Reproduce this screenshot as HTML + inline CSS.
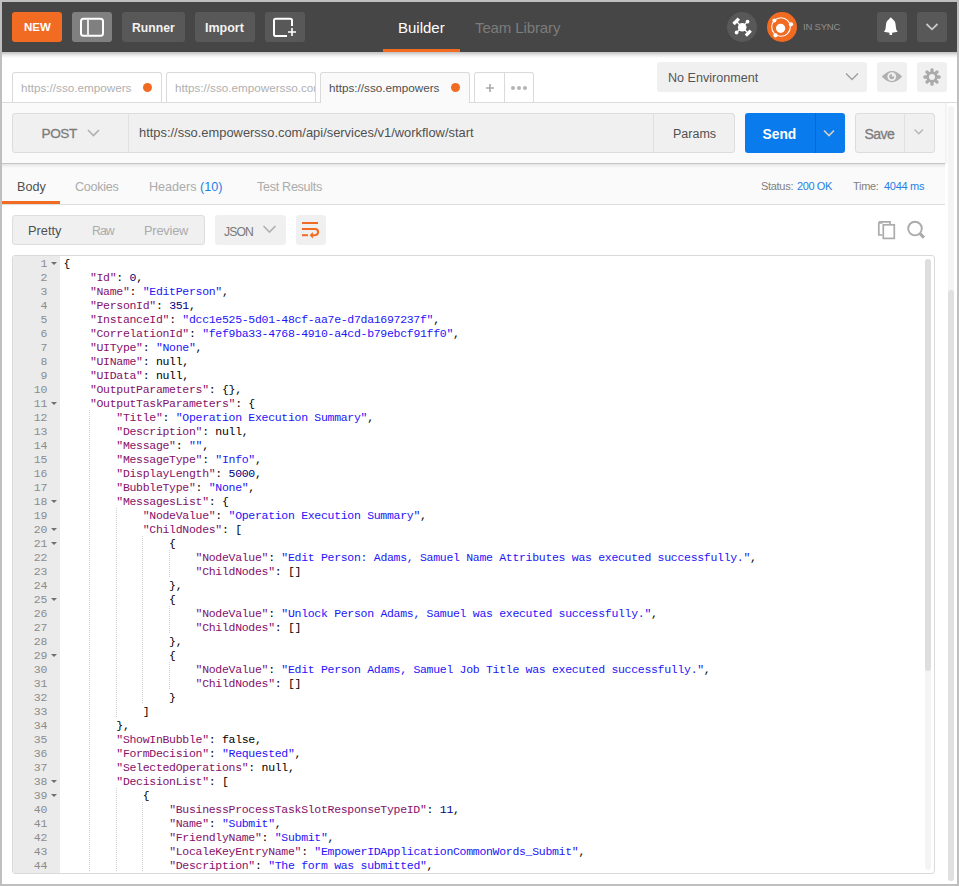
<!DOCTYPE html>
<html><head><meta charset="utf-8">
<style>
*{box-sizing:border-box;margin:0;padding:0}
html,body{width:959px;height:886px;overflow:hidden;background:#bfbfbf;font-family:"Liberation Sans",sans-serif;position:relative}
.a{position:absolute}
.t{position:absolute;white-space:nowrap;line-height:1}
.hb{position:absolute;top:12px;height:30px;border-radius:3px;background:#585858}
.hbt{position:absolute;white-space:nowrap;line-height:1;color:#f2f2f2;font-weight:bold;font-size:12.5px}

#code{font-family:"Liberation Mono",monospace;font-size:11.5px;letter-spacing:-0.3px;line-height:14px;white-space:pre;color:#000}
#code i{font-style:normal}
#code .k{color:#84106a}
#code .s{color:#2414f8}
#code .n{color:#000080}
#gut{font-family:"Liberation Mono",monospace;font-size:11.5px;letter-spacing:-0.3px;line-height:14px;color:#8c8c8c;text-align:right}
#gut div{padding-right:13px}
.g{position:absolute;width:1px;background-image:linear-gradient(#d0d0d0 50%,transparent 50%);background-size:1px 2px}
.f{position:absolute;left:37.6px;width:0;height:0;border-left:3px solid transparent;border-right:3px solid transparent;border-top:3.6px solid #707070;margin-top:6px}
</style></head><body>
<!-- window -->
<div class="a" style="left:2px;top:2px;width:955px;height:882px;background:#fff"></div>
<!-- header -->
<div class="a" style="left:2px;top:2px;width:955px;height:50px;background:#464646"></div>
<div class="a" style="left:2px;top:52px;width:955px;height:6px;background:linear-gradient(#c6c6c6,#cacaca 18%,#e6e6e6 45%,#fff)"></div>

<div class="hb" style="left:12px;width:50px;background:#f26b22"></div>
<div class="hbt" style="left:24px;top:22px;font-size:11.5px;color:#fff">NEW</div>

<div class="hb" style="left:72px;width:40px;background:#808080"></div>
<svg class="a" style="left:72px;top:12px" width="40" height="30" viewBox="0 0 40 30">
  <rect x="9" y="6.8" width="22" height="17" rx="2.5" fill="none" stroke="#fff" stroke-width="2"/>
  <line x1="16" y1="7" x2="16" y2="24" stroke="#e8e8e8" stroke-width="2"/>
</svg>

<div class="hb" style="left:122px;width:63px"></div>
<div class="hbt" style="left:132px;top:22px;font-size:12.2px">Runner</div>
<div class="hb" style="left:195px;width:60px"></div>
<div class="hbt" style="left:205px;top:22px">Import</div>

<div class="hb" style="left:265px;width:40px"></div>
<svg class="a" style="left:265px;top:12px" width="40" height="30" viewBox="0 0 40 30">
  <path d="M27 14 V8.5 Q27 6.8 25.3 6.8 H10.7 Q9 6.8 9 8.5 V22.2 Q9 24 10.7 24 H22" fill="none" stroke="#fff" stroke-width="2"/>
  <path d="M27 16 V24 M23 20 H31" fill="none" stroke="#fff" stroke-width="1.6"/>
</svg>

<div class="t" style="left:398px;top:20px;font-size:15px;color:#fff">Builder</div>
<div class="a" style="left:383px;top:49px;width:77px;height:3px;background:#f26b22"></div>
<div class="t" style="left:475px;top:20px;font-size:15px;color:#7c7c7c;letter-spacing:-0.12px">Team Library</div>

<!-- capture icon -->
<svg class="a" style="left:727px;top:12px" width="30" height="30" viewBox="0 0 30 30">
  <circle cx="15" cy="15" r="15" fill="#585858"/>
  <g fill="#fff" stroke="#fff">
    <circle cx="15.2" cy="15.3" r="4.3" stroke="none"/>
    <line x1="15" y1="15" x2="9" y2="9" stroke-width="1.2"/>
    <line x1="15" y1="15" x2="21" y2="21" stroke-width="1.2"/>
    <line x1="15" y1="15" x2="20.5" y2="9.6" stroke-width="1.2"/>
    <line x1="15" y1="15" x2="9.6" y2="20.5" stroke-width="1.2"/>
    <rect x="5.4" y="7.6" width="7.6" height="3.4" transform="rotate(-45 9.2 9.3)" stroke="none"/>
    <rect x="17.8" y="19.5" width="7" height="3.2" transform="rotate(-45 21.3 21.1)" stroke="none"/>
    <circle cx="20.5" cy="9.7" r="1.9" stroke="none"/>
    <circle cx="9.6" cy="20.5" r="1.9" stroke="none"/>
  </g>
</svg>
<!-- sync icon -->
<svg class="a" style="left:767px;top:12px" width="30" height="30" viewBox="0 0 30 30">
  <circle cx="15" cy="15" r="15" fill="#f26b22"/>
  <circle cx="14" cy="15" r="9.3" fill="none" stroke="#fff" stroke-width="1.1"/>
  <circle cx="13.6" cy="16.3" r="4.6" fill="#fff"/>
  <circle cx="7.4" cy="8.4" r="2" fill="#fff"/>
  <circle cx="24" cy="12.3" r="2.1" fill="#fff"/>
  <circle cx="8.5" cy="23.3" r="2.1" fill="#fff"/>
</svg>
<div class="t" style="left:803px;top:22px;font-size:9.6px;color:#8e8e8e;letter-spacing:-0.25px">IN SYNC</div>

<div class="hb" style="left:877px;width:30px"></div>
<svg class="a" style="left:877px;top:12px" width="30" height="30" viewBox="0 0 30 30">
  <path d="M13.8 5.4 Q13.3 5.4 12.6 6.5 L10.4 8.7 Q9.3 9.8 9.1 12 L8.5 16.8 Q8.1 18.6 6.8 19.8 L13.8 21 L20.8 19.8 Q19.5 18.6 19.1 16.8 L18.5 12 Q18.3 9.8 17.2 8.7 L15 6.5 Q14.3 5.4 13.8 5.4 Z" fill="#fff"/><rect x="12.5" y="20" width="2.6" height="3" fill="#fff"/>
</svg>
<div class="hb" style="left:917px;width:30px"></div>
<svg class="a" style="left:917px;top:12px" width="30" height="30" viewBox="0 0 30 30">
  <path d="M9.5 12 L15 17.3 L20.5 12" fill="none" stroke="#c8c8c8" stroke-width="1.8"/>
</svg>


<!-- tabs row -->
<div class="a" style="left:2px;top:102px;width:955px;height:1px;background:#dcdcdc"></div>
<div class="a" style="left:12px;top:72px;width:150px;height:30px;border:1px solid #dadada;border-bottom:none;border-radius:3px 3px 0 0;background:#fff;overflow:hidden">
  <div class="t" style="left:8px;top:8.5px;font-size:11.7px;color:#b0b0b0">https://sso.empowers</div>
  <div class="a" style="left:129.5px;top:9.6px;width:9px;height:9px;border-radius:50%;background:#f26b22"></div>
</div>
<div class="a" style="left:166px;top:72px;width:150px;height:30px;border:1px solid #dadada;border-bottom:none;border-radius:3px 3px 0 0;background:#fff;overflow:hidden">
  <div class="t" style="left:8px;top:8.5px;font-size:11.7px;color:#b0b0b0">https://sso.empowersso.com/api</div>
</div>
<div class="a" style="left:320px;top:72px;width:150px;height:31px;border:1px solid #dadada;border-bottom:none;border-radius:3px 3px 0 0;background:#fafafa;overflow:hidden">
  <div class="t" style="left:8px;top:8.5px;font-size:11.7px;color:#505050">https://sso.empowers</div>
  <div class="a" style="left:129.5px;top:9.6px;width:9px;height:9px;border-radius:50%;background:#f26b22"></div>
</div>
<div class="a" style="left:474px;top:72px;width:60px;height:30px;border:1px solid #dadada;border-bottom:none;border-radius:3px 3px 0 0;background:#fff"></div>
<div class="a" style="left:504px;top:72px;width:1px;height:30px;background:#dadada"></div>
<svg class="a" style="left:474px;top:72px" width="60" height="30" viewBox="0 0 60 30">
  <path d="M16 12 V20 M12 16 H20" stroke="#a8a8a8" stroke-width="1.6" fill="none"/>
  <circle cx="39" cy="16" r="2" fill="#b4b4b4"/><circle cx="45" cy="16" r="2" fill="#b4b4b4"/><circle cx="51" cy="16" r="2" fill="#b4b4b4"/>
</svg>

<div class="a" style="left:657px;top:62px;width:210px;height:30px;border-radius:3px;background:#f0f0f0"></div>
<div class="t" style="left:668px;top:72px;font-size:12.6px;color:#555">No Environment</div>
<svg class="a" style="left:845px;top:72px" width="14" height="10" viewBox="0 0 14 10">
  <path d="M1 1.5 L7 7.5 L13 1.5" stroke="#a0a0a0" stroke-width="1.5" fill="none"/>
</svg>
<div class="a" style="left:877px;top:62px;width:30px;height:30px;border-radius:3px;background:#f0f0f0"></div>
<svg class="a" style="left:877px;top:62px" width="30" height="30" viewBox="0 0 30 30">
  <path d="M4.8 14.6 Q15 3.4 25.2 14.6 Q15 25.8 4.8 14.6 Z" fill="#b0b0b0"/>
  <circle cx="14.8" cy="14.6" r="4.4" fill="#f0f0f0"/>
  <circle cx="14.8" cy="14.6" r="2.6" fill="#b0b0b0"/>
  <path d="M14.9 14.5 L14.9 11.8 A2.7 2.7 0 0 1 17.6 14.5 Z" fill="#f0f0f0"/>
</svg>
<div class="a" style="left:917px;top:62px;width:30px;height:30px;border-radius:3px;background:#f0f0f0"></div>
<svg class="a" style="left:917px;top:62px" width="30" height="30" viewBox="0 0 30 30">
  <g transform="translate(15 15)" fill="#aaaaaa">
    <circle r="5.6"/>
    <rect x="-1.65" y="-8.7" width="3.3" height="17.4" rx="1.5"/>
    <rect x="-1.65" y="-8.7" width="3.3" height="17.4" rx="1.5" transform="rotate(45)"/>
    <rect x="-1.65" y="-8.7" width="3.3" height="17.4" rx="1.5" transform="rotate(90)"/>
    <rect x="-1.65" y="-8.7" width="3.3" height="17.4" rx="1.5" transform="rotate(135)"/>
  </g>
  <circle cx="15" cy="15" r="3" fill="#f0f0f0"/>
</svg>

<!-- request section -->
<div class="a" style="left:2px;top:103px;width:943px;height:60px;background:#fafafa"></div>
<div class="a" style="left:12px;top:113px;width:723px;height:40px;border:1px solid #dcdcdc;border-radius:3px;background:#f0f0f0"></div>
<div class="a" style="left:128px;top:114px;width:1px;height:38px;background:#e0e0e0"></div>
<div class="a" style="left:653px;top:114px;width:1px;height:38px;background:#e0e0e0"></div>
<div class="t" style="left:41.5px;top:127.2px;font-size:13.6px;letter-spacing:-0.4px;-webkit-text-stroke:0.3px #7c7c7c;color:#7c7c7c">POST</div>
<svg class="a" style="left:87px;top:128px" width="14" height="10" viewBox="0 0 14 10">
  <path d="M1 2 L6.5 7.5 L12 2" stroke="#b0b0b0" stroke-width="1.6" fill="none"/>
</svg>
<div class="t" style="left:139px;top:127px;font-size:12.9px;color:#505050">https://sso.empowersso.com/api/services/v1/workflow/start</div>
<div class="t" style="left:673px;top:128px;font-size:12.5px;color:#505050">Params</div>

<div class="a" style="left:745px;top:113px;width:100px;height:40px;border-radius:3px;background:#097bed"></div>
<div class="a" style="left:815px;top:113px;width:1px;height:40px;background:#0a68c8"></div>
<div class="t" style="left:762.5px;top:128px;font-size:13.8px;font-weight:bold;color:#fff">Send</div>
<svg class="a" style="left:823px;top:129px" width="12" height="9" viewBox="0 0 12 9">
  <path d="M1 1.5 L6 6.5 L11 1.5" stroke="#d8d0c4" stroke-width="1.6" fill="none"/>
</svg>
<div class="a" style="left:855px;top:113px;width:80px;height:40px;border:1px solid #dcdcdc;border-radius:3px;background:#f0f0f0"></div>
<div class="a" style="left:904px;top:114px;width:1px;height:38px;background:#e0e0e0"></div>
<div class="t" style="left:864.5px;top:126.5px;font-size:14px;letter-spacing:-0.5px;-webkit-text-stroke:0.3px #7c7c7c;color:#7c7c7c">Save</div>
<svg class="a" style="left:913px;top:128px" width="12" height="9" viewBox="0 0 12 9">
  <path d="M1.5 1.5 L5.8 5.8 L10 1.5" stroke="#b4b4b4" stroke-width="1.3" fill="none"/>
</svg>

<!-- response tabs -->
<div class="a" style="left:2px;top:164px;width:943px;height:40px;background:#fafafa"></div>
<div class="a" style="left:2px;top:204px;width:943px;height:1px;background:#dedede"></div>
<div class="a" style="left:2px;top:163px;width:943px;height:1px;background:#c6c6c6"></div>
<div class="a" style="left:945px;top:103px;width:3px;height:61px;background:linear-gradient(90deg,rgba(0,0,0,0.07),rgba(0,0,0,0))"></div>
<div class="a" style="left:2px;top:164px;width:943px;height:4px;background:linear-gradient(rgba(0,0,0,0.09),rgba(0,0,0,0))"></div>
<div class="a" style="left:2px;top:201px;width:58px;height:3px;background:#f26b22"></div>
<div class="t" style="left:17px;top:181px;font-size:12.6px;color:#505050">Body</div>
<div class="t" style="left:75px;top:181px;font-size:12.6px;color:#ababab;letter-spacing:-0.3px">Cookies</div>
<div class="t" style="left:149px;top:181px;font-size:12.6px;color:#ababab">Headers <span style="color:#1f80e6">(10)</span></div>
<div class="t" style="left:257px;top:181px;font-size:12.6px;color:#ababab;letter-spacing:-0.3px">Test Results</div>
<div class="t" style="left:761px;top:181px;font-size:11px;color:#808080;letter-spacing:-0.3px">Status:</div>
<div class="t" style="left:797px;top:181px;font-size:11px;color:#1f80e6;letter-spacing:-0.4px">200 OK</div>
<div class="t" style="left:853px;top:181px;font-size:11px;color:#808080;letter-spacing:-0.3px">Time:</div>
<div class="t" style="left:884px;top:181px;font-size:11px;color:#1f80e6;letter-spacing:-0.3px">4044 ms</div>

<!-- pretty bar -->
<div class="a" style="left:12px;top:215px;width:193px;height:30px;border:1px solid #dedede;border-radius:3px;background:#f0f0f0"></div>
<div class="t" style="left:28px;top:225px;font-size:12.8px;color:#505050">Pretty</div>
<div class="t" style="left:92px;top:225px;font-size:12.8px;color:#ababab;letter-spacing:-1px;font-size:12.3px">Raw</div>
<div class="t" style="left:144px;top:225px;font-size:12.8px;color:#ababab;letter-spacing:-0.2px">Preview</div>
<div class="a" style="left:215px;top:215px;width:71px;height:30px;border-radius:3px;background:#f0f0f0"></div>
<div class="t" style="left:224px;top:225.5px;font-size:12.2px;color:#7a7a7a;letter-spacing:-0.9px">JSON</div>
<svg class="a" style="left:262px;top:224px" width="16" height="10" viewBox="0 0 16 10">
  <path d="M1.5 2 L7.5 8 L13.5 2" stroke="#b0b0b0" stroke-width="1.6" fill="none"/>
</svg>
<div class="a" style="left:296px;top:215px;width:30px;height:30px;border-radius:3px;background:#f0f0f0"></div>
<svg class="a" style="left:296px;top:215px" width="30" height="30" viewBox="0 0 30 30">
  <g fill="none" stroke="#f26b22" stroke-width="2">
    <path d="M6 8 H22"/>
    <path d="M6 14 H19 A3.1 3.1 0 0 1 19 20.2 H15.5"/>
    <path d="M6 20.2 H12"/>
  </g>
  <path d="M13.6 20.2 L16.9 17 L16.9 23.4 Z" fill="#f26b22"/>
</svg>
<svg class="a" style="left:876px;top:219px" width="22" height="22" viewBox="0 0 22 22">
  <g fill="none" stroke="#ababab" stroke-width="1.7">
    <path d="M6.5 4 H2.8 V16 H6.5"/>
    <path d="M2.8 2.8 H14 V5"/>
    <rect x="7.3" y="5.8" width="11" height="13.6"/>
  </g>
</svg>
<svg class="a" style="left:904px;top:218px" width="24" height="24" viewBox="0 0 24 24">
  <circle cx="11" cy="10.6" r="6.8" fill="none" stroke="#ababab" stroke-width="1.9"/>
  <path d="M15.8 15.4 L20 19.6" stroke="#ababab" stroke-width="3" fill="none"/>
</svg>

<!-- outer scrollbar -->
<div class="a" style="left:948px;top:106px;width:6px;height:775px;border-radius:3px;background:#f4f4f4"></div>
<div class="a" style="left:948px;top:290px;width:6px;height:591px;border-radius:3px;background:#e0e0e0"></div>

<!-- editor -->
<div class="a" style="left:12px;top:255px;width:923px;height:619px;border:1px solid #dadada;border-radius:3px;background:#fff;overflow:hidden">
  <div class="a" style="left:0;top:0;width:47px;height:617px;background:#ebebeb"></div>
  <div class="a" style="left:912px;top:3px;width:6px;height:611px;border-radius:3px;background:#f4f4f4"></div><div class="a" style="left:912px;top:3px;width:6px;height:412px;border-radius:3px;background:#dedede"></div>
  <div id="gut" class="a" style="left:0;top:1px;width:47px"><div>1</div><div>2</div><div>3</div><div>4</div><div>5</div><div>6</div><div>7</div><div>8</div><div>9</div><div>10</div><div>11</div><div>12</div><div>13</div><div>14</div><div>15</div><div>16</div><div>17</div><div>18</div><div>19</div><div>20</div><div>21</div><div>22</div><div>23</div><div>24</div><div>25</div><div>26</div><div>27</div><div>28</div><div>29</div><div>30</div><div>31</div><div>32</div><div>33</div><div>34</div><div>35</div><div>36</div><div>37</div><div>38</div><div>39</div><div>40</div><div>41</div><div>42</div><div>43</div><div>44</div></div><div class="a" style="left:0;top:0"><div class="f" style="top:0px"></div><div class="f" style="top:140px"></div><div class="f" style="top:238px"></div><div class="f" style="top:266px"></div><div class="f" style="top:280px"></div><div class="f" style="top:336px"></div><div class="f" style="top:392px"></div><div class="f" style="top:518px"></div><div class="f" style="top:532px"></div></div>
  <div class="a" style="left:0;top:0"><div class="g" style="left:76px;top:154px;height:462px"></div><div class="g" style="left:103px;top:252px;height:210px"></div><div class="g" style="left:103px;top:532px;height:84px"></div><div class="g" style="left:129px;top:280px;height:168px"></div><div class="g" style="left:129px;top:546px;height:70px"></div><div class="g" style="left:156px;top:294px;height:28px"></div><div class="g" style="left:156px;top:350px;height:28px"></div><div class="g" style="left:156px;top:406px;height:28px"></div></div><div id="code" class="a" style="left:50.5px;top:1px"><div>{</div><div>    <i class="k">&quot;Id&quot;</i>: <i class="n">0</i>,</div><div>    <i class="k">&quot;Name&quot;</i>: <i class="s">&quot;EditPerson&quot;</i>,</div><div>    <i class="k">&quot;PersonId&quot;</i>: <i class="n">351</i>,</div><div>    <i class="k">&quot;InstanceId&quot;</i>: <i class="s">&quot;dcc1e525-5d01-48cf-aa7e-d7da1697237f&quot;</i>,</div><div>    <i class="k">&quot;CorrelationId&quot;</i>: <i class="s">&quot;fef9ba33-4768-4910-a4cd-b79ebcf91ff0&quot;</i>,</div><div>    <i class="k">&quot;UIType&quot;</i>: <i class="s">&quot;None&quot;</i>,</div><div>    <i class="k">&quot;UIName&quot;</i>: null,</div><div>    <i class="k">&quot;UIData&quot;</i>: null,</div><div>    <i class="k">&quot;OutputParameters&quot;</i>: {},</div><div>    <i class="k">&quot;OutputTaskParameters&quot;</i>: {</div><div>        <i class="k">&quot;Title&quot;</i>: <i class="s">&quot;Operation Execution Summary&quot;</i>,</div><div>        <i class="k">&quot;Description&quot;</i>: null,</div><div>        <i class="k">&quot;Message&quot;</i>: <i class="s">&quot;&quot;</i>,</div><div>        <i class="k">&quot;MessageType&quot;</i>: <i class="s">&quot;Info&quot;</i>,</div><div>        <i class="k">&quot;DisplayLength&quot;</i>: <i class="n">5000</i>,</div><div>        <i class="k">&quot;BubbleType&quot;</i>: <i class="s">&quot;None&quot;</i>,</div><div>        <i class="k">&quot;MessagesList&quot;</i>: {</div><div>            <i class="k">&quot;NodeValue&quot;</i>: <i class="s">&quot;Operation Execution Summary&quot;</i>,</div><div>            <i class="k">&quot;ChildNodes&quot;</i>: [</div><div>                {</div><div>                    <i class="k">&quot;NodeValue&quot;</i>: <i class="s">&quot;Edit Person: Adams, Samuel Name Attributes was executed successfully.&quot;</i>,</div><div>                    <i class="k">&quot;ChildNodes&quot;</i>: []</div><div>                },</div><div>                {</div><div>                    <i class="k">&quot;NodeValue&quot;</i>: <i class="s">&quot;Unlock Person Adams, Samuel was executed successfully.&quot;</i>,</div><div>                    <i class="k">&quot;ChildNodes&quot;</i>: []</div><div>                },</div><div>                {</div><div>                    <i class="k">&quot;NodeValue&quot;</i>: <i class="s">&quot;Edit Person Adams, Samuel Job Title was executed successfully.&quot;</i>,</div><div>                    <i class="k">&quot;ChildNodes&quot;</i>: []</div><div>                }</div><div>            ]</div><div>        },</div><div>        <i class="k">&quot;ShowInBubble&quot;</i>: false,</div><div>        <i class="k">&quot;FormDecision&quot;</i>: <i class="s">&quot;Requested&quot;</i>,</div><div>        <i class="k">&quot;SelectedOperations&quot;</i>: null,</div><div>        <i class="k">&quot;DecisionList&quot;</i>: [</div><div>            {</div><div>                <i class="k">&quot;BusinessProcessTaskSlotResponseTypeID&quot;</i>: <i class="n">11</i>,</div><div>                <i class="k">&quot;Name&quot;</i>: <i class="s">&quot;Submit&quot;</i>,</div><div>                <i class="k">&quot;FriendlyName&quot;</i>: <i class="s">&quot;Submit&quot;</i>,</div><div>                <i class="k">&quot;LocaleKeyEntryName&quot;</i>: <i class="s">&quot;EmpowerIDApplicationCommonWords_Submit&quot;</i>,</div><div>                <i class="k">&quot;Description&quot;</i>: <i class="s">&quot;The form was submitted&quot;</i>,</div></div>
</div>

</body></html>
